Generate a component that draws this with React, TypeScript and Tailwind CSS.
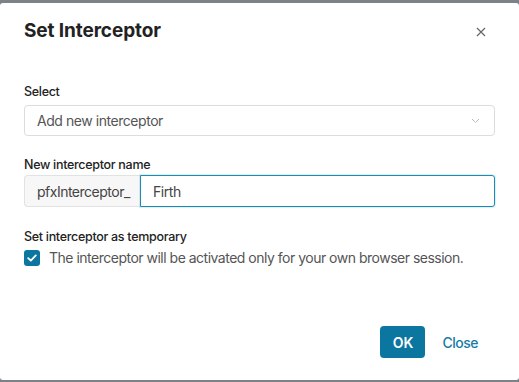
import React from "react";

export default function App() {
  return (
    <div
      className="w-[519px] h-[382px] bg-[#7e8286] pt-[3px] pb-[2px] overflow-hidden"
      style={{ fontFamily: "Inter, 'Noto Sans', sans-serif" }}
    >
      <div className="h-[377px] bg-white rounded-[3px] flex flex-col">
        <div className="flex items-center justify-between pl-6 pr-[33px] h-[56px] pt-[1px]">
          <h1 className="text-[19px] font-bold text-[#222] tracking-[-0.1px]">Set Interceptor</h1>
          <svg width="10" height="10" viewBox="0 0 10 10" className="text-[#666]">
            <path d="M1 1L9 9M9 1L1 9" stroke="currentColor" strokeWidth="1.2" />
          </svg>
        </div>
        <div className="px-6 pt-[25px] flex flex-col">
          <label className="text-[12.5px] font-medium text-[#222] leading-[16px] tracking-[-0.3px]">Select</label>
          <div className="mt-[5px] h-[31px] border border-[#dcdcdc] rounded-[4px] flex items-center justify-between pl-3 pr-[14px]">
            <span className="text-[14px] text-[#555] tracking-[-0.45px]">Add new interceptor</span>
            <svg width="9" height="6" viewBox="0 0 9 6">
              <path d="M1 1L4.5 4.5L8 1" stroke="#bbb" strokeWidth="1" fill="none" />
            </svg>
          </div>
          <label className="mt-[21px] text-[12.5px] font-medium text-[#222] leading-[16px] tracking-[-0.3px]">New interceptor name</label>
          <div className="mt-[2px] h-[32px] flex">
            <div className="w-[116px] shrink-0 bg-[#f7f7f7] border border-[#e2e2e2] border-r-0 rounded-l-[4px] flex items-center pl-[12px] text-[14px] text-[#444] tracking-[-0.5px]">
              pfxInterceptor_
            </div>
            <div className="flex-1 border border-[#1a8db4] rounded-r-[3px] shadow-[0_0_0_1px_rgba(26,141,180,0.15)] flex items-center pl-[12px] text-[14px] text-[#444] tracking-[-0.45px]">
              Firth
            </div>
          </div>
          <label className="mt-[22px] text-[12.5px] font-medium text-[#222] leading-[16px] tracking-[-0.3px]">Set interceptor as temporary</label>
          <div className="mt-[5px] flex items-center gap-[9px]">
            <div className="w-[16px] h-[16px] shrink-0 rounded-[3px] bg-[#0b76a0] flex items-center justify-center">
              <svg width="10" height="8" viewBox="0 0 10 8">
                <path d="M1.2 4.2L3.8 6.6L8.8 1.4" stroke="white" strokeWidth="1.8" fill="none" strokeLinecap="round" strokeLinejoin="round" />
              </svg>
            </div>
            <span className="text-[14px] text-[#555] leading-[16px] tracking-[-0.5px] whitespace-nowrap">The interceptor will be activated only for your own browser session.</span>
          </div>
        </div>
        <div className="mt-auto mb-[22px] flex items-center justify-end pr-[41px] gap-[17px]">
          <button className="w-[45px] h-[32px] bg-[#0b76a0] rounded-[4px] text-white text-[14px] font-semibold">OK</button>
          <button className="text-[14px] font-medium text-[#1a7ba6] tracking-[-0.5px]">Close</button>
        </div>
      </div>
    </div>
  );
}
